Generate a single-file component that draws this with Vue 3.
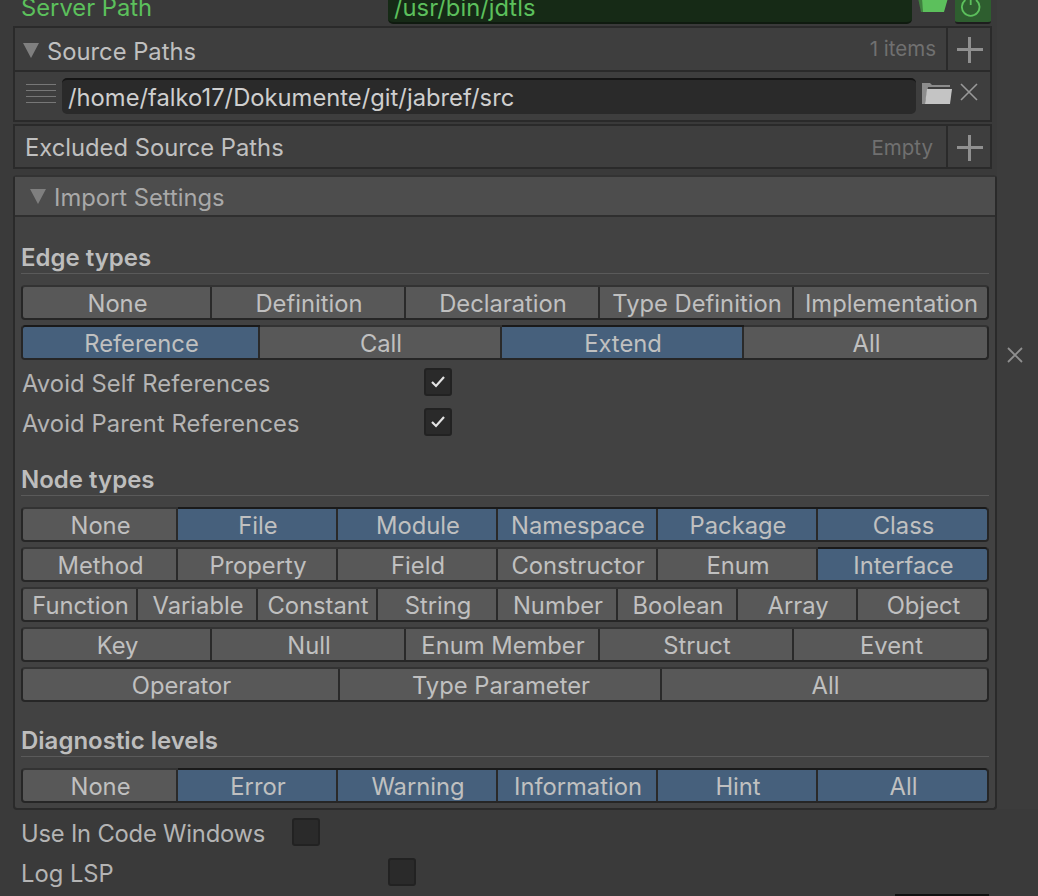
<template>
  <div class="page">
    <div class="main">
      <div class="server-row">
        <span class="server-label">Server Path</span>
        <div class="server-input">/usr/bin/jdtls</div>
        <svg class="server-folder" width="30" height="16" viewBox="0 0 30 16">
          <path d="M0 0h6v14H3z" fill="#3f7f3f" />
          <path d="M4 0h26l-4 14H5z" fill="#5cc05c" />
        </svg>
        <button class="server-reload">
          <svg width="24" height="24" viewBox="0 0 24 24" fill="none" stroke="#5cc05c" stroke-width="1.8">
            <path d="M4.4 0A8.8 8.8 0 1 0 15 0" />
            <path d="M9.7 0v5" />
          </svg>
        </button>
      </div>

      <div class="list-box">
        <div class="list-head">
          <span class="arrow"></span>
          <span class="list-title">Source Paths</span>
          <span class="list-count">1 items</span>
          <span class="list-add"><i class="plus"></i></span>
        </div>
        <div class="list-item">
          <div class="handle"><i></i><i></i><i></i><i></i></div>
          <div class="path-input">/home/falko17/Dokumente/git/jabref/src</div>
          <svg class="folder" width="30" height="21" viewBox="0 0 30 21">
            <path d="M0 0h8l2 2h18v2H6L3 21H0z" fill="#8c8c8c" />
            <path d="M5 6h25l-2 15H3z" fill="#c4c4c4" />
          </svg>
          <svg class="remove" width="18" height="18" viewBox="0 0 18 18" stroke="#999" stroke-width="1.6" fill="none"><path d="M1 1l16 16M17 1L1 17" /></svg>
        </div>
      </div>

      <div class="list-box second">
        <div class="list-head">
          <span class="list-title plain">Excluded Source Paths</span>
          <span class="list-count empty">Empty</span>
          <span class="list-add"><i class="plus"></i></span>
        </div>
      </div>

      <div class="panel">
        <div class="panel-head">
          <span class="arrow"></span>
          <span class="panel-title">Import Settings</span>
        </div>
        <div class="panel-body">
          <div v-for="section in sections" :key="section.title" class="section">
            <div class="section-title">{{ section.title }}</div>
            <div
              v-for="(row, i) in section.rows"
              :key="i"
              class="seg-row"
              :style="{ gridTemplateColumns: rowColumns(row.length) }"
            >
              <div
                v-for="item in row"
                :key="item"
                class="seg"
                :class="{ on: section.active.includes(item) }"
              >{{ item }}</div>
            </div>
            <div v-for="c in section.checks" :key="c" class="check-row">
              <span class="check-label">{{ c }}</span>
              <span class="checkbox">
                <svg width="16" height="14" viewBox="0 0 16 14" fill="none" stroke="#e4e4e4" stroke-width="2.2"><path d="M2 7l4 4 8-9" /></svg>
              </span>
            </div>
          </div>
        </div>
      </div>

      <div class="toggle-row">
        <span class="toggle-label first">Use In Code Windows</span>
        <span class="checkbox"></span>
      </div>
      <div class="toggle-row">
        <span class="toggle-label second-label">Log LSP</span>
        <span class="checkbox"></span>
      </div>
    </div>

    <div class="side">
      <svg width="16" height="16" viewBox="0 0 16 16" stroke="#8f8f8f" stroke-width="1.8" fill="none"><path d="M1 1l14 14M15 1L1 15" /></svg>
    </div>
    <div class="corner"></div>
  </div>
</template>

<script setup>
const sections = [
  {
    title: 'Edge types',
    rows: [
      ['None', 'Definition', 'Declaration', 'Type Definition', 'Implementation'],
      ['Reference', 'Call', 'Extend', 'All']
    ],
    active: ['Reference', 'Extend'],
    checks: ['Avoid Self References', 'Avoid Parent References']
  },
  {
    title: 'Node types',
    rows: [
      ['None', 'File', 'Module', 'Namespace', 'Package', 'Class'],
      ['Method', 'Property', 'Field', 'Constructor', 'Enum', 'Interface'],
      ['Function', 'Variable', 'Constant', 'String', 'Number', 'Boolean', 'Array', 'Object'],
      ['Key', 'Null', 'Enum Member', 'Struct', 'Event'],
      ['Operator', 'Type Parameter', 'All']
    ],
    active: ['File', 'Module', 'Namespace', 'Package', 'Class', 'Interface'],
    checks: []
  },
  {
    title: 'Diagnostic levels',
    rows: [['None', 'Error', 'Warning', 'Information', 'Hint', 'All']],
    active: ['Error', 'Warning', 'Information', 'Hint', 'All'],
    checks: []
  }
]

// cell width per button count, first cell is a bit narrower and the last takes the rest
const cellWidths = { 3: 322, 4: 242, 5: 194, 6: 160, 8: 120 }

const rowColumns = (count) => {
  const w = cellWidths[count]
  return `${w - 5}px repeat(${count - 2}, ${w}px) 1fr`
}
</script>

<style>
html,
body {
  margin: 0;
  background: #3a3a3a;
}
</style>

<style scoped>
.page {
  position: relative;
  display: flex;
  width: 1038px;
  height: 896px;
  overflow: hidden;
  background: #3a3a3a;
  font-family: Inter, "Liberation Sans", sans-serif;
  font-size: 23.75px;
  color: #c0c0c0;
}

.main {
  width: 997px;
  flex: none;
  padding-left: 13px;
  box-sizing: border-box;
}

.side {
  flex: 1;
  padding: 347px 0 0 10px;
  height: 809px;
  box-sizing: border-box;
  background: #3c3c3c;
}

.side svg {
  display: block;
}

.corner {
  position: absolute;
  left: 895px;
  top: 894px;
  width: 94px;
  height: 2px;
  background: #111;
}

.server-row {
  display: flex;
  align-items: flex-start;
  height: 36px;
  margin-top: -12px;
  margin-bottom: 2px;
}

.server-label {
  width: 375px;
  padding-left: 8px;
  box-sizing: border-box;
  line-height: 40px;
  color: #5cc05c;
  flex: none;
}

.server-input {
  width: 524px;
  height: 36px;
  flex: none;
  padding-left: 6px;
  box-sizing: border-box;
  line-height: 40px;
  background: #162a16;
  border-bottom: 2px solid #0f1a0f;
  border-radius: 0 0 5px 5px;
  color: #5cc05c;
  overflow: hidden;
}

.server-folder {
  margin: 10px 0 0 6px;
  flex: none;
}

.server-reload {
  display: block;
  width: 36px;
  height: 36px;
  margin-left: 7px;
  padding: 12px 0 0;
  border: 0;
  border-bottom: 2px solid #1d1d1d;
  background: #2e5e2f;
  border-radius: 0 0 3px 3px;
  flex: none;
}

.list-box {
  width: 979px;
  box-sizing: border-box;
  border: 2px solid #2a2a2a;
  background: #3e3e3e;
}

.list-box.second {
  margin-top: 2px;
}

.list-head {
  display: flex;
  align-items: center;
  height: 42px;
}

.second .list-head {
  height: 41px;
}

.list-item {
  display: flex;
  align-items: center;
  height: 50px;
  border-top: 2px solid #2a2a2a;
  box-sizing: border-box;
}

.arrow {
  width: 0;
  height: 0;
  margin: 3px 0 0 8px;
  border-left: 8px solid transparent;
  border-right: 8px solid transparent;
  border-top: 15px solid #7f7f7f;
  flex: none;
}

.list-title {
  margin-left: 8px;
  padding-top: 5px;
  color: #c0c0c0;
}

.list-title.plain {
  margin-left: 10px;
  padding-top: 2px;
}

.list-count {
  margin-left: auto;
  margin-right: 10px;
  padding-bottom: 1px;
  font-size: 20.5px;
  color: #707070;
}

.list-count.empty {
  margin-right: 13px;
  padding: 2px 0 0;
}

.list-add {
  position: relative;
  width: 44px;
  height: 100%;
  flex: none;
  border-left: 2px solid #2a2a2a;
  box-sizing: border-box;
}

.plus::before,
.plus::after {
  content: "";
  position: absolute;
  background: #909090;
}

.plus::before {
  left: 9px;
  top: 20px;
  width: 26px;
  height: 3px;
}

.plus::after {
  left: 20px;
  top: 9px;
  width: 3px;
  height: 26px;
}

.handle {
  width: 30px;
  margin-left: 11px;
  flex: none;
}

.handle i {
  display: block;
  height: 1px;
  margin-bottom: 5px;
  background: #777;
}

.path-input {
  width: 854px;
  height: 36px;
  margin-left: 6px;
  padding-left: 6px;
  box-sizing: border-box;
  line-height: 36px;
  background: #2a2a2a;
  border-top: 2px solid #151515;
  border-radius: 5px;
  color: #cfcfcf;
  flex: none;
}

.folder {
  margin: -6px 0 0 6px;
  flex: none;
}

.remove {
  margin: -8px 0 0 8px;
  flex: none;
}

.panel {
  margin-top: 6px;
  width: 984px;
  box-sizing: border-box;
  border: 2px solid #2a2a2a;
  border-top-color: #333;
  border-radius: 4px;
  background: #424242;
}

.panel-head {
  display: flex;
  align-items: center;
  height: 40px;
  box-sizing: border-box;
  border-bottom: 2px solid #2f2f2f;
  background: #4d4d4d;
}

.panel-title {
  margin-left: 8px;
  padding-top: 2px;
  color: #a9a9a9;
}

.panel-head .arrow {
  margin: 0 0 0 15px;
}

.panel-body {
  padding: 2px 6px 0;
}

.section-title {
  margin-top: 18px;
  height: 36px;
  line-height: 42px;
  font-size: 24px;
  font-weight: 600;
  color: #bdbdbd;
  border-bottom: 1px solid #5a5a5a;
  margin-bottom: 11px;
}

.seg-row {
  display: grid;
  height: 35px;
  margin-bottom: 5px;
  box-sizing: border-box;
  border: 2px solid #262626;
  border-top-color: #333;
  border-radius: 4px;
  background: #585858;
}

.seg {
  padding-left: 2px;
  text-align: center;
  line-height: 33px;
  border-right: 2px solid #2a2a2a;
  white-space: nowrap;
  overflow: hidden;
}

.seg:first-child {
  border-radius: 2px 0 0 2px;
}

.seg:last-child {
  border-right: 0;
  border-radius: 0 2px 2px 0;
}

.seg.on {
  background: #46607c;
  box-shadow: 0 -2px 0 #1a1a1a;
}

.check-row {
  display: flex;
  align-items: center;
  height: 34px;
  margin-bottom: 6px;
}

.check-row:last-child {
  margin-bottom: 20px;
}

.check-label {
  width: 402px;
  padding-top: 2px;
  padding-left: 1px;
  letter-spacing: 0.1px;
  flex: none;
  color: #b4b4b4;
}

.checkbox {
  display: flex;
  align-items: center;
  justify-content: center;
  width: 28px;
  height: 28px;
  box-sizing: border-box;
  border: 2px solid #222;
  border-radius: 3px;
  background: #2a2a2a;
  flex: none;
}

.toggle-row {
  display: flex;
  align-items: center;
  height: 28px;
  margin-bottom: 12px;
  padding-left: 8px;
}

.panel + .toggle-row {
  margin-top: 8px;
}

.toggle-label {
  padding-top: 2px;
  color: #b4b4b4;
  flex: none;
}

.toggle-label.first {
  width: 271px;
  letter-spacing: -0.2px;
}

.toggle-label.second-label {
  width: 367px;
}
</style>
